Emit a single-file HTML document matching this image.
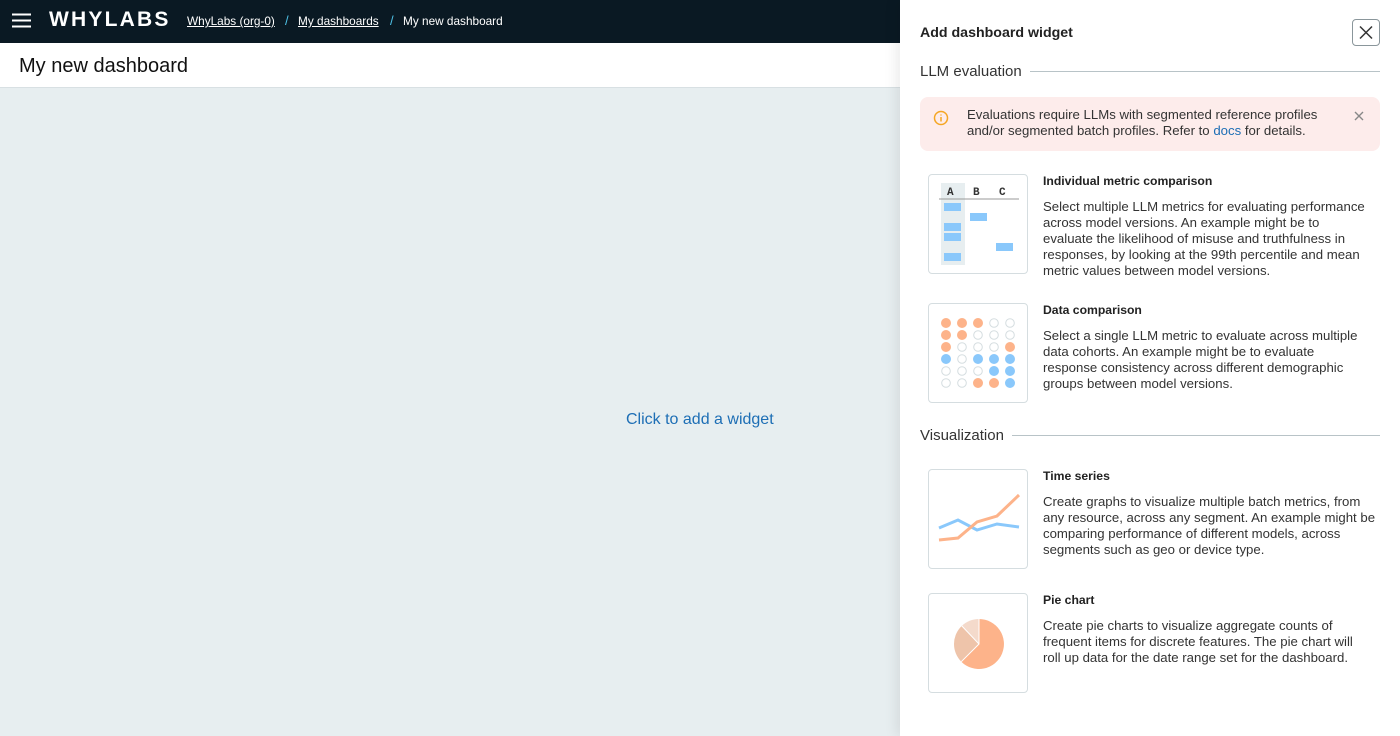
<!DOCTYPE html>
<html><head><meta charset="utf-8"><style>
*{box-sizing:border-box;margin:0;padding:0}
body{width:1400px;height:736px;overflow:hidden;font-family:"Liberation Sans",sans-serif;background:#e7eef0;position:relative;color:#222}
.top{position:absolute;left:0;top:0;width:1400px;height:43px;background:#0a1923;color:#fff}
.hdr{position:absolute;left:0;top:43px;width:1400px;height:45px;background:#fff;border-bottom:1px solid #d8e0e3}
.hdr span{position:absolute;left:19px;top:12px;font-size:20px;color:#111}
.cta{position:absolute;left:626px;top:411px;font-size:16px;color:#1d6eb5}
.drawer{position:absolute;left:900px;top:0;width:500px;height:736px;background:#fff;box-shadow:-4px 0 12px rgba(0,0,0,.08)}
.sec{position:absolute;left:20px;font-size:15px;color:#333;display:flex;align-items:center;width:460px}
.sec:after{content:"";flex:1;height:1px;background:#b8c3c7;margin-left:8px}
.card{position:absolute;left:28px;width:100px;height:100px;border:1px solid #d5dde0;border-radius:4px}
.t{position:absolute;left:143px;font-size:12.2px;font-weight:bold;color:#222}
.d{position:absolute;left:143px;width:326px;font-size:13.2px;line-height:16px;color:#333}
</style></head><body>
<div class="top">
<svg style="position:absolute;left:12px;top:13px" width="19" height="15"><path d="M0 1.5H19M0 7.5H19M0 13.5H19" stroke="#fff" stroke-width="2"/></svg>
<span style="position:absolute;left:49px;top:8px;font-size:21px;font-weight:bold;letter-spacing:2.2px">WHYLABS</span>
<span style="position:absolute;left:187px;top:14px;font-size:11.8px;text-decoration:underline">WhyLabs (org-0)</span>
<span style="position:absolute;left:285px;top:13px;font-size:13px;color:#4fc3e8">/</span>
<span style="position:absolute;left:298px;top:14px;font-size:11.8px;text-decoration:underline">My dashboards</span>
<span style="position:absolute;left:390px;top:13px;font-size:13px;color:#4fc3e8">/</span>
<span style="position:absolute;left:403px;top:14px;font-size:11.8px">My new dashboard</span>
</div>
<div class="hdr"><span>My new dashboard</span></div>
<div class="cta">Click to add a widget</div>
<div class="drawer">
<div style="position:absolute;left:20px;top:25px;font-size:14.2px;font-weight:bold;color:#222">Add dashboard widget</div>
<div style="position:absolute;left:452px;top:19px;width:28px;height:27px;border:1px solid #8a969b;border-radius:4px"><svg width="26" height="25"><path d="M7 6.5L19 18.5M19 6.5L7 18.5" stroke="#333" stroke-width="1.5"/></svg></div>
<div class="sec" style="top:63px">LLM evaluation</div>
<div style="position:absolute;left:20px;top:97px;width:460px;height:54px;background:#fdeceb;border-radius:8px">
<svg style="position:absolute;left:13px;top:13px" width="16" height="16"><circle cx="8" cy="8" r="6.5" fill="none" stroke="#f5a623" stroke-width="1.5"/><path d="M8 7v4.5M8 4.5v1" stroke="#f5a623" stroke-width="1.5"/></svg>
<div style="position:absolute;left:47px;top:10px;font-size:13.2px;line-height:16px;color:#333;white-space:nowrap">Evaluations require LLMs with segmented reference profiles<br>and/or segmented batch profiles. Refer to <span style="color:#1d6eb5">docs</span> for details.</div>
<svg style="position:absolute;left:433px;top:13px" width="12" height="12"><path d="M2 2L10 10M10 2L2 10" stroke="#888" stroke-width="1.4"/></svg>
</div>
<div class="card" style="top:174px"><svg width="100" height="100">
<rect x="12" y="8" width="24" height="82" fill="#e7eef0"/>
<text x="18" y="20" font-size="11" font-weight="bold" fill="#333" font-family="Liberation Mono">A</text>
<text x="44" y="20" font-size="11" font-weight="bold" fill="#333" font-family="Liberation Mono">B</text>
<text x="70" y="20" font-size="11" font-weight="bold" fill="#333" font-family="Liberation Mono">C</text>
<line x1="10" y1="24" x2="90" y2="24" stroke="#999"/>
<g fill="#8ac8fb"><rect x="15" y="28" width="17" height="8"/><rect x="15" y="48" width="17" height="8"/><rect x="15" y="58" width="17" height="8"/><rect x="15" y="78" width="17" height="8"/><rect x="41" y="38" width="17" height="8"/><rect x="67" y="68" width="17" height="8"/></g></svg></div>
<div class="t" style="top:174px">Individual metric comparison</div>
<div class="d" style="top:199px">Select multiple LLM metrics for evaluating performance across model versions. An example might be to evaluate the likelihood of misuse and truthfulness in responses, by looking at the 99th percentile and mean metric values between model versions.</div>
<div class="card" style="top:303px"><svg width="100" height="100" id="dots"></svg></div>
<div class="t" style="top:303px">Data comparison</div>
<div class="d" style="top:328px">Select a single LLM metric to evaluate across multiple data cohorts. An example might be to evaluate response consistency across different demographic groups between model versions.</div>
<div class="sec" style="top:427px">Visualization</div>
<div class="card" style="top:469px"><svg width="100" height="100"><polyline points="10,58 29,50 48,60 68,54 90,57" fill="none" stroke="#8ac8fb" stroke-width="3"/><polyline points="10,70 29,68 48,52 68,46 90,25" fill="none" stroke="#fdb38a" stroke-width="3"/></svg></div>
<div class="t" style="top:469px">Time series</div>
<div class="d" style="top:494px;width:336px">Create graphs to visualize multiple batch metrics, from any resource, across any segment. An example might be comparing performance of different models, across segments such as geo or device type.</div>
<div class="card" style="top:593px"><svg width="100" height="100"><path d="M50 50L50 25A25 25 0 1 1 32.3 67.7Z" fill="#fdb38a"/><path d="M50 50L32.3 67.7A25 25 0 0 1 32.8 31.9Z" fill="#eec4aa"/><path d="M50 50L32.8 31.9A25 25 0 0 1 50 25Z" fill="#f4dacb"/><path d="M50 25V50L32.3 67.7M50 50L32.8 31.9" stroke="#fff" fill="none"/></svg></div>
<div class="t" style="top:593px">Pie chart</div>
<div class="d" style="top:618px">Create pie charts to visualize aggregate counts of frequent items for discrete features. The pie chart will roll up data for the date range set for the dashboard.</div>
</div>
<script>
var g="OOOww OOwww Owwwo BwBBB wwwBB wwOOB".split(" "),s="";
g.forEach(function(r,i){for(var j=0;j<5;j++){var c=r[j],x=17+j*16,y=19+i*12;
s+=c=="w"?'<circle cx="'+x+'" cy="'+y+'" r="4.3" fill="none" stroke="#d5dde0"/>':'<circle cx="'+x+'" cy="'+y+'" r="5" fill="'+(c=="B"?"#8ac8fb":"#fdb38a")+'"/>';}});
document.getElementById("dots").innerHTML=s;
</script>
</body></html>
